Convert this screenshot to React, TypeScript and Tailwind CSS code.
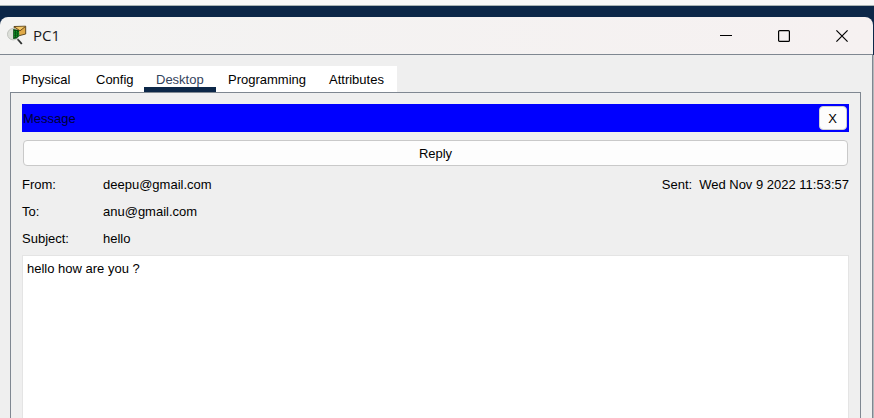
import React from "react";

const tabs = ["Physical", "Config", "Desktop", "Programming", "Attributes"];

const fields = [
  { label: "From:", value: "deepu@gmail.com" },
  { label: "To:", value: "anu@gmail.com" },
  { label: "Subject:", value: "hello" },
];

function AppIcon() {
  return (
    <svg width="20" height="20" viewBox="0 0 20 20" aria-hidden="true">
      <path d="M7 1.5L18.7 1.2V9L9 11.5Z" fill="#e0aa48" stroke="#4f3b16" strokeWidth="0.9" />
      <path d="M7.5 2L13 5.8L18.2 1.7" fill="#f3c766" stroke="#5c4015" strokeWidth="0.9" />
      <circle cx="6.2" cy="9.2" r="5.7" fill="#dcdfd9" stroke="#c0c3be" />
      <path d="M6.2 4L12 5.2L12.3 11L9.5 13.5L6.2 14Z" fill="#064d12" />
      <path d="M7.6 6V13M9.5 6V12.5M11.3 7V11" stroke="#12a02a" strokeWidth="0.9" strokeDasharray="1.6 0.7" />
      <path d="M10.5 14L14.8 19" stroke="#2d302f" strokeWidth="1.9" />
      <path d="M10 13.5L11.5 15.2" stroke="#8b8e8c" strokeWidth="1" />
    </svg>
  );
}

function TitleBar() {
  const control = "flex h-full w-[58px] items-center justify-center";
  return (
    <header className="flex h-[38px] shrink-0 items-center rounded-tr-lg rounded-tl-lg border-b border-[#7f8791] bg-linear-to-r from-[#f3f3f2] to-[#f6f1f1] pr-0.5">
      <div className="flex flex-1 items-center gap-1.5 pb-px pl-[7px]">
        <AppIcon />
        <h1 className="font-['Open_Sans',sans-serif] text-[15px] leading-5 text-[#1a1a1a]">PC1</h1>
      </div>
      <button className={control} aria-label="Minimize">
        <svg width="12" height="12" viewBox="0 0 12 12">
          <path d="M0 5.5H12" stroke="#000" />
        </svg>
      </button>
      <button className={control} aria-label="Maximize">
        <svg width="12" height="12" viewBox="0 0 12 12">
          <rect x="0.6" y="0.6" width="10.8" height="10.8" rx="1" fill="none" stroke="#000" strokeWidth="1.2" />
        </svg>
      </button>
      <button className={control} aria-label="Close">
        <svg width="12" height="12" viewBox="0 0 12 12">
          <path d="M0.4 0.4L11.6 11.6M11.6 0.4L0.4 11.6" stroke="#000" strokeWidth="1.2" />
        </svg>
      </button>
    </header>
  );
}

export default function App() {
  return (
    <div className="flex h-screen flex-col overflow-hidden bg-[#0c2748] font-['Liberation_Sans',Arial,sans-serif] text-[13px] leading-4 text-black">
      <div className="h-1.5 shrink-0 border-b border-[#a9b4b4] bg-[#f8f8f8]" />
      <div className="mt-[11px] mr-px flex min-h-0 flex-1 flex-col">
        <TitleBar />
        <main className="flex min-h-0 flex-1 flex-col border-r border-[#7f8791] bg-[#efefef] pt-[11px] pr-[11px] pl-[10px] shadow-[1px_0_0_#b4b8bb]">
          <nav className="grid h-[26px] shrink-0 grid-cols-[74px_60px_72px_101px_80px] self-start bg-white">
            {tabs.map((tab) => (
              <button
                key={tab}
                className={
                  tab === "Desktop"
                    ? "border-b-5 border-[#0c2748] pt-[7px] pl-3 text-left leading-[14px] text-[#33435c]"
                    : "border-b-5 border-white pt-[7px] pl-3 text-left leading-[14px]"
                }
              >
                {tab}
              </button>
            ))}
          </nav>
          <section className="flex min-h-0 flex-1 flex-col border border-b-0 border-[#7f8791] px-[11px] pt-[11px]">
            <div className="flex h-7 shrink-0 items-center justify-between bg-[#0000ff] pr-0.5 pl-px">
              <h2 className="pt-0.5 text-[#000038]">Message</h2>
              <button className="h-6 w-7 rounded border border-[#d0d0d0] bg-[#fdfdfd] pt-0.5 pr-px">X</button>
            </div>
            <button className="mx-px mt-2 h-[26px] shrink-0 rounded border border-[#c9c9c9] bg-[#fdfdfd] pt-0.5">
              Reply
            </button>
            <div className="mt-[5px] flex shrink-0 justify-between">
              <dl className="grid grid-cols-[81px_auto] leading-[27px]">
                {fields.map((field) => (
                  <React.Fragment key={field.label}>
                    <dt>{field.label}</dt>
                    <dd>{field.value}</dd>
                  </React.Fragment>
                ))}
              </dl>
              <dl className="flex gap-[7px] leading-[27px]">
                <dt>Sent:</dt>
                <dd>Wed Nov 9 2022 11:53:57</dd>
              </dl>
            </div>
            <textarea
              aria-label="Message body"
              readOnly
              defaultValue="hello how are you ?"
              className="mt-[3px] min-h-0 flex-1 resize-none border border-b-0 border-[#e4e4e4] bg-white px-1 py-[5px] outline-none"
            />
          </section>
        </main>
      </div>
    </div>
  );
}
